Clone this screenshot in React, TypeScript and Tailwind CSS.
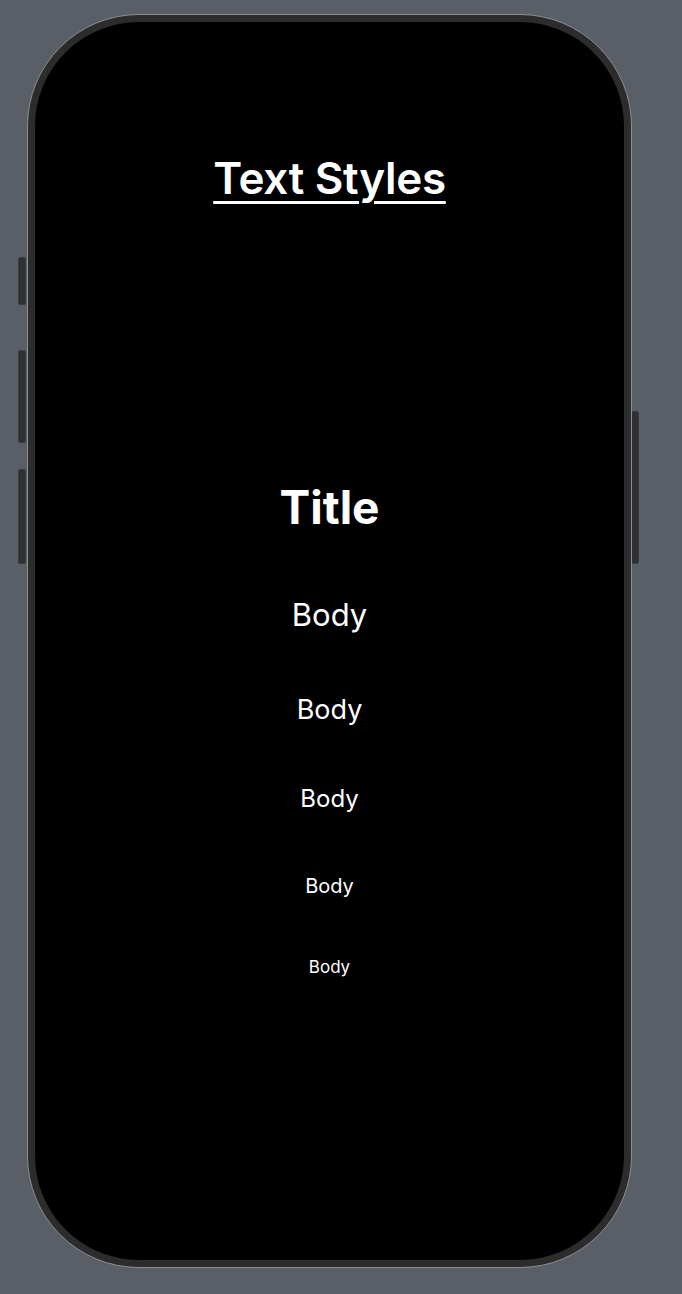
const sizes = ['text-[31px]', 'text-[27px]', 'text-[24px]', 'text-[20px]', 'text-[17px]']
const gaps = ['mt-[69px]', 'mt-[66px]', 'mt-[64px]', 'mt-[65px]', 'mt-[63px]']

function SideButton({ className }: { className: string }) {
  return <div className={`absolute w-[8px] rounded-[2px] bg-[#2f3032] border border-[#3b3d40] ${className}`} />
}

export default function App() {
  return (
    <div className="w-[682px] h-[1294px] bg-[#5a5f67] relative overflow-hidden font-['Inter','Liberation_Sans',sans-serif]">
      <SideButton className="left-[18px] top-[257px] h-[48px]" />
      <SideButton className="left-[18px] top-[350px] h-[93px]" />
      <SideButton className="left-[18px] top-[469px] h-[95px]" />
      <SideButton className="left-[631px] top-[411px] h-[153px]" />

      <div className="absolute left-[27px] top-[14px] w-[605px] h-[1254px] rounded-[112px] border border-[#8c8e91] bg-[#2c2c2d] p-[7px]">
        <div className="w-full h-full rounded-[104px] bg-black flex flex-col items-center">
          <div className="mt-[38px] flex gap-[14px] opacity-30">
            <div className="w-[100px] h-[44px] rounded-full border border-[#0c0c0c]" />
            <div className="w-[44px] h-[44px] rounded-full border border-[#0c0c0c]" />
          </div>
          <h1 className="mt-[52px] text-[44px] leading-none font-semibold text-white underline decoration-[3px] underline-offset-[7px] tracking-[-0.3px]">
            Text Styles
          </h1>
          <p className="mt-[284px] text-[46px] leading-none font-bold text-white">Title</p>
          {sizes.map((s, i) => (
            <p key={i} className={`${gaps[i]} ${s} leading-none text-white`}>
              Body
            </p>
          ))}
        </div>
      </div>
    </div>
  )
}
